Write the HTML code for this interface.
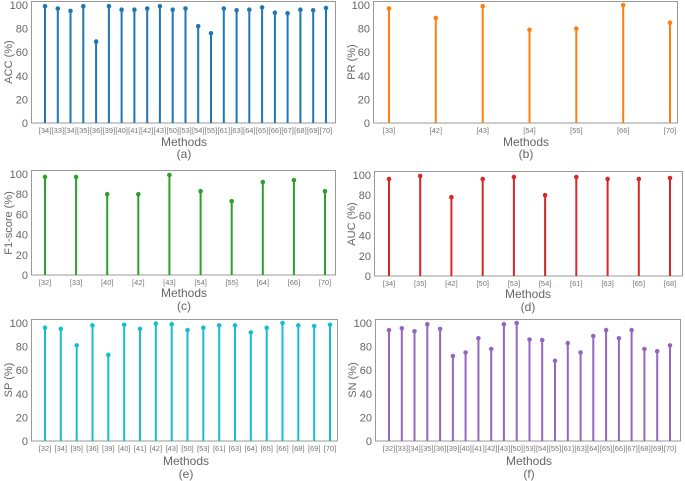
<!DOCTYPE html>
<html><head><meta charset="utf-8"><style>
html,body{margin:0;padding:0;background:#fff;}
svg{display:block;font-family:"Liberation Sans",sans-serif;}
.ax{fill:none;stroke:#999;stroke-width:1;}
.tl{font-size:11px;fill:#666;text-anchor:end;}
.ml{font-size:7.5px;fill:#777;text-anchor:middle;}
.xl{font-size:12px;fill:#666;text-anchor:middle;}
.yl{font-size:11px;fill:#666;text-anchor:middle;}
.st{stroke-width:2;fill:none;}
.mk{stroke-width:4.6;stroke-linecap:round;fill:none;}
</style></head><body>
<svg width="685" height="481" viewBox="0 0 685 481" xmlns="http://www.w3.org/2000/svg">
<!-- Panel a -->
<rect class="ax" x="31.5" y="1.5" width="304" height="121.5"/>
<g class="tl"><text x="28" y="127">0</text><text x="28" y="103.4">20</text><text x="28" y="79.8">40</text><text x="28" y="56.2">60</text><text x="28" y="32.6">80</text><text x="28" y="9">100</text></g>
<text class="yl" transform="translate(12,62) rotate(-90)">ACC (%)</text>
<g stroke="#1f77b4">
<path class="st" d="M45 123V6.2M57.8 123V8.5M70.5 123V10.9M83.3 123V6.2M96.1 123V41.6M108.9 123V6.2M121.6 123V9.7M134.4 123V9.7M147.2 123V8.5M159.9 123V6.2M172.7 123V9.7M185.5 123V8.5M198.2 123V26.2M211 123V33.3M223.8 123V8.5M236.6 123V10.3M249.3 123V9.7M262.1 123V7.4M274.9 123V12.7M287.6 123V13.3M300.4 123V9.7M313.2 123V10.3M326 123V8"/>
<path class="mk" d="M45 6.2h0M57.8 8.5h0M70.5 10.9h0M83.3 6.2h0M96.1 41.6h0M108.9 6.2h0M121.6 9.7h0M134.4 9.7h0M147.2 8.5h0M159.9 6.2h0M172.7 9.7h0M185.5 8.5h0M198.2 26.2h0M211 33.3h0M223.8 8.5h0M236.6 10.3h0M249.3 9.7h0M262.1 7.4h0M274.9 12.7h0M287.6 13.3h0M300.4 9.7h0M313.2 10.3h0M326 8h0"/>
</g>
<g class="ml"><text x="45" y="133">[34]</text><text x="57.8" y="133">[33]</text><text x="70.5" y="133">[34]</text><text x="83.3" y="133">[35]</text><text x="96.1" y="133">[36]</text><text x="108.9" y="133">[39]</text><text x="121.6" y="133">[40]</text><text x="134.4" y="133">[41]</text><text x="147.2" y="133">[42]</text><text x="159.9" y="133">[43]</text><text x="172.7" y="133">[50]</text><text x="185.5" y="133">[53]</text><text x="198.2" y="133">[54]</text><text x="211" y="133">[55]</text><text x="223.8" y="133">[61]</text><text x="236.6" y="133">[63]</text><text x="249.3" y="133">[64]</text><text x="262.1" y="133">[65]</text><text x="274.9" y="133">[66]</text><text x="287.6" y="133">[67]</text><text x="300.4" y="133">[68]</text><text x="313.2" y="133">[69]</text><text x="326" y="133">[70]</text></g>
<text class="xl" x="184" y="146">Methods</text><text class="xl" x="184" y="158">(a)</text>

<!-- Panel b -->
<rect class="ax" x="373.5" y="1.5" width="304" height="121.5"/>
<g class="tl"><text x="370" y="127">0</text><text x="370" y="103.4">20</text><text x="370" y="79.8">40</text><text x="370" y="56.2">60</text><text x="370" y="32.6">80</text><text x="370" y="9">100</text></g>
<text class="yl" transform="translate(355,62) rotate(-90)">PR (%)</text>
<g stroke="#ff7f0e">
<path class="st" d="M389 123V8.5M435.8 123V18M482.7 123V6.2M529.5 123V29.8M576.3 123V28.6M623.2 123V5M670 123V22.7"/>
<path class="mk" d="M389 8.5h0M435.8 18h0M482.7 6.2h0M529.5 29.8h0M576.3 28.6h0M623.2 5h0M670 22.7h0"/>
</g>
<g class="ml"><text x="389" y="133">[33]</text><text x="435.8" y="133">[42]</text><text x="482.7" y="133">[43]</text><text x="529.5" y="133">[54]</text><text x="576.3" y="133">[55]</text><text x="623.2" y="133">[66]</text><text x="670" y="133">[70]</text></g>
<text class="xl" x="526" y="146">Methods</text><text class="xl" x="526" y="158">(b)</text>

<!-- Panel c -->
<rect class="ax" x="31.5" y="170.5" width="304" height="104.5"/>
<g class="tl"><text x="28" y="279">0</text><text x="28" y="258.8">20</text><text x="28" y="238.6">40</text><text x="28" y="218.4">60</text><text x="28" y="198.2">80</text><text x="28" y="178">100</text></g>
<text class="yl" transform="translate(12,223) rotate(-90)">F1-score (%)</text>
<g stroke="#2ca02c">
<path class="st" d="M45 275V177M76.1 275V177M107.2 275V194.2M138.3 275V194.2M169.4 275V175M200.6 275V191.2M231.7 275V201.3M262.8 275V182.1M293.9 275V180.1M325 275V191.2"/>
<path class="mk" d="M45 177h0M76.1 177h0M107.2 194.2h0M138.3 194.2h0M169.4 175h0M200.6 191.2h0M231.7 201.3h0M262.8 182.1h0M293.9 180.1h0M325 191.2h0"/>
</g>
<g class="ml"><text x="45" y="285">[32]</text><text x="76.1" y="285">[33]</text><text x="107.2" y="285">[40]</text><text x="138.3" y="285">[42]</text><text x="169.4" y="285">[43]</text><text x="200.6" y="285">[54]</text><text x="231.7" y="285">[55]</text><text x="262.8" y="285">[64]</text><text x="293.9" y="285">[66]</text><text x="325" y="285">[70]</text></g>
<text class="xl" x="184" y="297">Methods</text><text class="xl" x="184" y="310">(c)</text>

<!-- Panel d -->
<rect class="ax" x="374.5" y="171.5" width="308" height="104.5"/>
<g class="tl"><text x="371" y="280">0</text><text x="371" y="259.8">20</text><text x="371" y="239.6">40</text><text x="371" y="219.4">60</text><text x="371" y="199.2">80</text><text x="371" y="179">100</text></g>
<text class="yl" transform="translate(355,224) rotate(-90)">AUC (%)</text>
<g stroke="#d62728">
<path class="st" d="M389 276V179M420.2 276V176M451.4 276V197.2M482.7 276V179M513.9 276V177M545.1 276V195.2M576.3 276V177M607.6 276V179M638.8 276V179M670 276V178"/>
<path class="mk" d="M389 179h0M420.2 176h0M451.4 197.2h0M482.7 179h0M513.9 177h0M545.1 195.2h0M576.3 177h0M607.6 179h0M638.8 179h0M670 178h0"/>
</g>
<g class="ml"><text x="389" y="286">[34]</text><text x="420.2" y="286">[35]</text><text x="451.4" y="286">[42]</text><text x="482.7" y="286">[50]</text><text x="513.9" y="286">[53]</text><text x="545.1" y="286">[54]</text><text x="576.3" y="286">[61]</text><text x="607.6" y="286">[63]</text><text x="638.8" y="286">[65]</text><text x="670" y="286">[68]</text></g>
<text class="xl" x="528" y="298">Methods</text><text class="xl" x="528" y="311">(d)</text>

<!-- Panel e -->
<rect class="ax" x="31.5" y="319.5" width="306" height="121.5"/>
<g class="tl"><text x="28" y="445">0</text><text x="28" y="421.4">20</text><text x="28" y="397.8">40</text><text x="28" y="374.2">60</text><text x="28" y="350.6">80</text><text x="28" y="327">100</text></g>
<text class="yl" transform="translate(12,380) rotate(-90)">SP (%)</text>
<g stroke="#17becf">
<path class="st" d="M45 441V327.7M60.8 441V328.9M76.7 441V345.4M92.5 441V325.4M108.3 441V354.9M124.2 441V324.8M140 441V328.9M155.8 441V323.6M171.7 441V324.2M187.5 441V330.1M203.3 441V327.7M219.2 441V325.4M235 441V325.4M250.8 441V332.4M266.7 441V327.7M282.5 441V323M298.3 441V325.4M314.2 441V326M330 441V324.8"/>
<path class="mk" d="M45 327.7h0M60.8 328.9h0M76.7 345.4h0M92.5 325.4h0M108.3 354.9h0M124.2 324.8h0M140 328.9h0M155.8 323.6h0M171.7 324.2h0M187.5 330.1h0M203.3 327.7h0M219.2 325.4h0M235 325.4h0M250.8 332.4h0M266.7 327.7h0M282.5 323h0M298.3 325.4h0M314.2 326h0M330 324.8h0"/>
</g>
<g class="ml"><text x="45" y="451">[32]</text><text x="60.8" y="451">[34]</text><text x="76.7" y="451">[35]</text><text x="92.5" y="451">[36]</text><text x="108.3" y="451">[39]</text><text x="124.2" y="451">[40]</text><text x="140" y="451">[41]</text><text x="155.8" y="451">[42]</text><text x="171.7" y="451">[43]</text><text x="187.5" y="451">[50]</text><text x="203.3" y="451">[53]</text><text x="219.2" y="451">[61]</text><text x="235" y="451">[63]</text><text x="250.8" y="451">[64]</text><text x="266.7" y="451">[65]</text><text x="282.5" y="451">[66]</text><text x="298.3" y="451">[68]</text><text x="314.2" y="451">[69]</text><text x="330" y="451">[70]</text></g>
<text class="xl" x="186" y="465">Methods</text><text class="xl" x="186" y="478">(e)</text>

<!-- Panel f -->
<rect class="ax" x="375.5" y="319.5" width="305" height="121.5"/>
<g class="tl"><text x="372" y="445">0</text><text x="372" y="421.4">20</text><text x="372" y="397.8">40</text><text x="372" y="374.2">60</text><text x="372" y="350.6">80</text><text x="372" y="327">100</text></g>
<text class="yl" transform="translate(356,380) rotate(-90)">SN (%)</text>
<g stroke="#9467bd">
<path class="st" d="M389 441V330.1M401.8 441V328.3M414.5 441V331.3M427.3 441V324.2M440.1 441V328.9M452.9 441V356M465.6 441V352.5M478.4 441V338.3M491.2 441V349M503.9 441V324.2M516.7 441V323M529.5 441V339.5M542.2 441V340.1M555 441V360.8M567.8 441V343.1M580.6 441V352.5M593.3 441V336M606.1 441V330.1M618.9 441V338.3M631.6 441V330.1M644.4 441V349M657.2 441V351.3M670 441V345.4"/>
<path class="mk" d="M389 330.1h0M401.8 328.3h0M414.5 331.3h0M427.3 324.2h0M440.1 328.9h0M452.9 356h0M465.6 352.5h0M478.4 338.3h0M491.2 349h0M503.9 324.2h0M516.7 323h0M529.5 339.5h0M542.2 340.1h0M555 360.8h0M567.8 343.1h0M580.6 352.5h0M593.3 336h0M606.1 330.1h0M618.9 338.3h0M631.6 330.1h0M644.4 349h0M657.2 351.3h0M670 345.4h0"/>
</g>
<g class="ml"><text x="389" y="451">[32]</text><text x="401.8" y="451">[33]</text><text x="414.5" y="451">[34]</text><text x="427.3" y="451">[35]</text><text x="440.1" y="451">[36]</text><text x="452.9" y="451">[39]</text><text x="465.6" y="451">[40]</text><text x="478.4" y="451">[41]</text><text x="491.2" y="451">[42]</text><text x="503.9" y="451">[43]</text><text x="516.7" y="451">[50]</text><text x="529.5" y="451">[53]</text><text x="542.2" y="451">[54]</text><text x="555" y="451">[55]</text><text x="567.8" y="451">[61]</text><text x="580.6" y="451">[63]</text><text x="593.3" y="451">[64]</text><text x="606.1" y="451">[65]</text><text x="618.9" y="451">[66]</text><text x="631.6" y="451">[67]</text><text x="644.4" y="451">[68]</text><text x="657.2" y="451">[69]</text><text x="670" y="451">[70]</text></g>
<text class="xl" x="529" y="465">Methods</text><text class="xl" x="529" y="478">(f)</text>
</svg>
</body></html>
